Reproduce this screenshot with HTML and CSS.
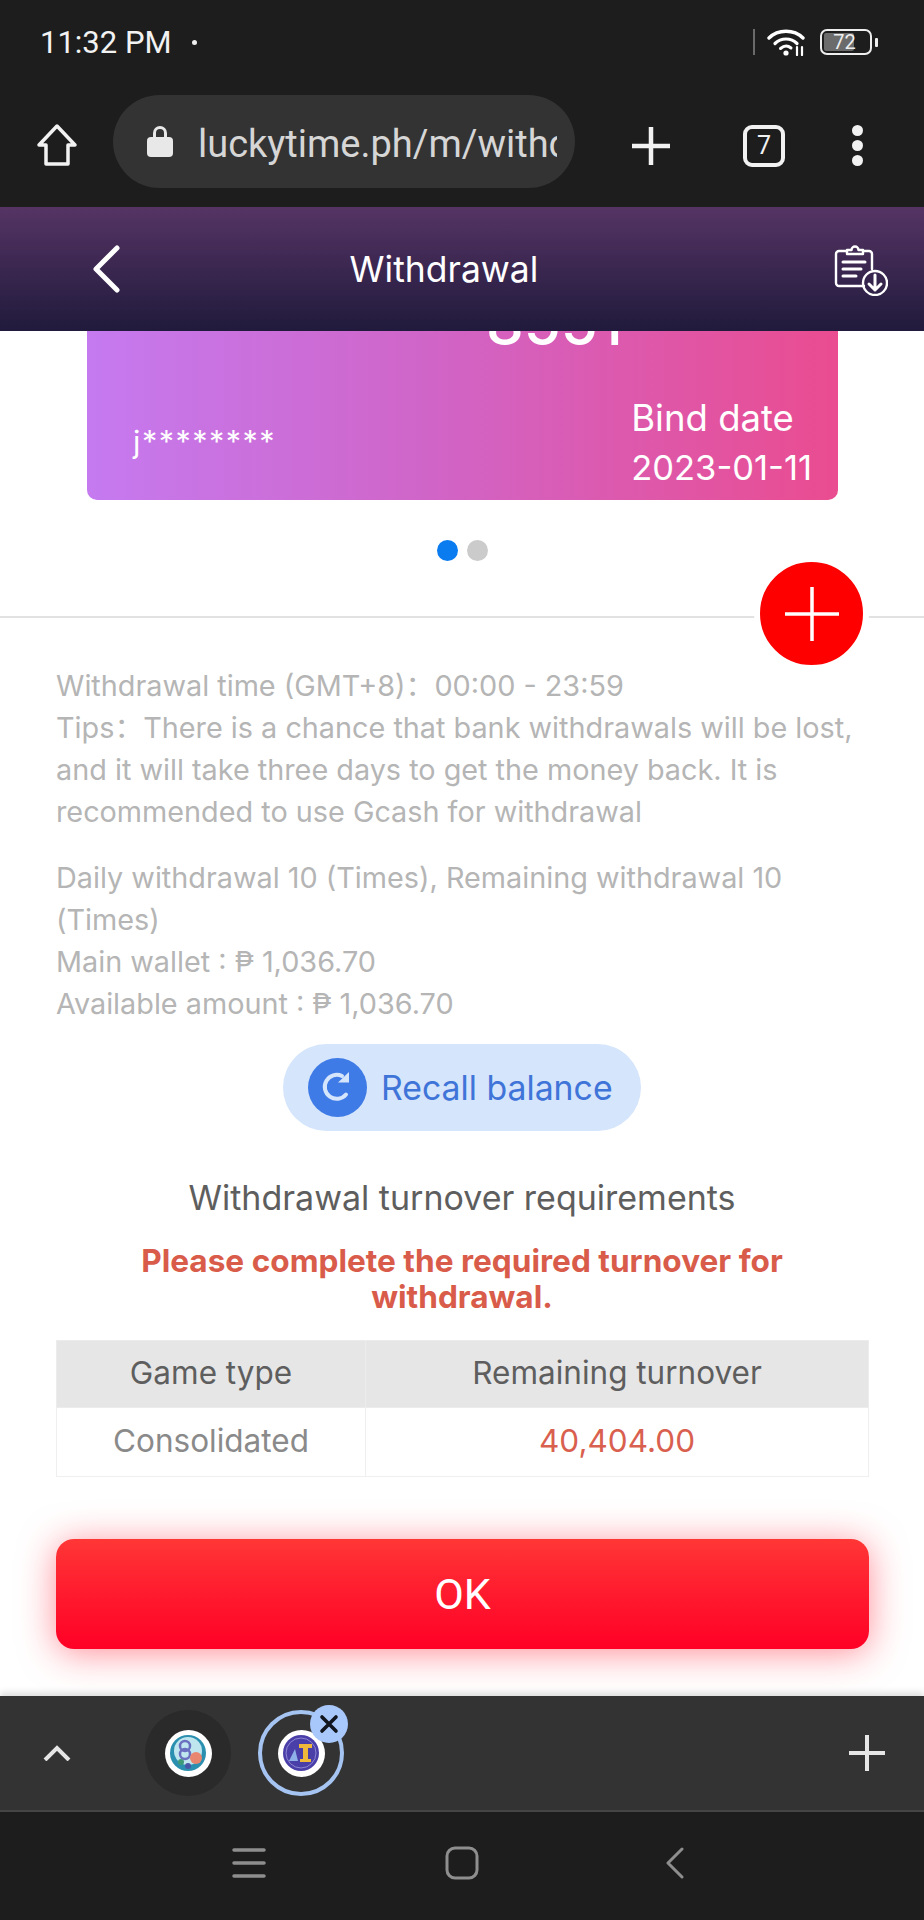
FILE: index.html
```html
<!DOCTYPE html>
<html lang="en">
<head>
<meta charset="utf-8">
<title>Withdrawal</title>
<link rel="stylesheet" href="styles.css">
</head>
<body>
<div class="phone">
  <div class="status-bar">
    <span class="clock">11:32 PM</span>
    <span class="notif-dot"></span>
    <span class="status-icons">
      <span class="status-sep"></span>
      <svg class="wifi" viewBox="0 0 40 28" width="40" height="28" fill="none" stroke="#fff" stroke-linecap="round">
        <path d="M2 10C11 1 27 1 36 10" stroke-width="3.4"/>
        <path d="M8 15.5C14 9.5 24 9.5 30 15.5" stroke-width="3.2"/>
        <path d="M13.5 20.5C17 17.5 21 17.5 24 20" stroke-width="3"/>
        <circle cx="19" cy="25" r="2.6" fill="#fff" stroke="none"/>
        <path d="M30 19v8M35 19v8" stroke-width="2.2"/>
      </svg>
      <span class="battery"><span class="battery-level"></span><span class="battery-num">72</span></span>
      <span class="battery-nub"></span>
    </span>
  </div>

  <div class="toolbar">
    <svg class="home" viewBox="0 0 42 44" width="42" height="44" fill="none" stroke="#f2f2f2" stroke-width="3.500" stroke-linejoin="round">
      <path d="M21 3L39 22H32V41H10V22H3Z"/>
    </svg>
    <div class="url-pill">
      <svg viewBox="0 0 26 32" width="26" height="32" fill="#e8e8e8">
        <path d="M6 13V8a7 7 0 0 1 14 0v5h-3V8a4 4 0 0 0-8 0v5z"/>
        <rect y="12" width="26" height="20" rx="4"/>
      </svg>
      <span class="url-text">luckytime.ph/m/withdrawal</span>
    </div>
    <svg class="tool-plus" viewBox="0 0 38 38" width="38" height="38" stroke="#f2f2f2" stroke-width="4.5">
      <path d="M19 0V38M0 19H38"/>
    </svg>
    <span class="tab-count">7</span>
    <span class="kebab"><i></i><i></i><i></i></span>
  </div>

  <header class="page-header">
    <svg class="back" viewBox="0 0 28 48" width="28" height="48" fill="none" stroke="#fff" stroke-width="5" stroke-linecap="round" stroke-linejoin="round">
      <path d="M25 3L4 24L25 45"/>
    </svg>
    <h1>Withdrawal</h1>
    <svg class="records" viewBox="0 0 54 54" width="54" height="54" fill="none" stroke="#fff" stroke-width="2.4" stroke-linecap="round" stroke-linejoin="round">
      <path d="M30 44H5a3 3 0 0 1-3-3V12a3 3 0 0 1 3-3h8M29 9h6a3 3 0 0 1 3 3v15"/>
      <path d="M13 12V8h4.500a3.500 3.500 0 0 1 7 0H29v4z"/>
      <path d="M9 20H31M9 27H27M9 34H22" stroke-width="3"/>
      <circle cx="41" cy="41" r="12"/>
      <path d="M41 33V48M35 42l6 6 6-6" stroke-width="3"/>
    </svg>
  </header>

  <main class="content">
    <section class="card">
      <div class="card-number">8551</div>
      <div class="card-foot">
        <span class="card-name">j********</span>
        <div class="card-date">
          <span>Bind date</span>
          <span class="card-date-value">2023-01-11</span>
        </div>
      </div>
    </section>

    <div class="dots"><i class="dot dot-on"></i><i class="dot"></i></div>
    <hr class="divider">
    <button class="fab" aria-label="Add card">
      <svg viewBox="0 0 54 54" width="54" height="54" stroke="#fff" stroke-width="3.500">
        <path d="M27 0V54M0 27H54"/>
      </svg>
    </button>

    <div class="notes">
      <p>Withdrawal time (GMT+8)：00:00 - 23:59<br>Tips：There is a chance that bank withdrawals will be lost, and it will take three days to get the money back. It is recommended to use Gcash for withdrawal</p>
      <p>Daily withdrawal 10 (Times), Remaining withdrawal 10 (Times)<br>Main wallet : ₱ 1,036.70<br>Available amount : ₱ 1,036.70</p>
    </div>

    <button class="recall">
      <svg viewBox="0 0 59 59" width="59" height="59">
        <circle cx="29.500" cy="29.500" r="29.500" fill="#3f7be6"/>
        <path d="M38 36.500A12 12 0 1 1 34 18" fill="none" stroke="#d5e5fb" stroke-width="4" stroke-linecap="round"/>
        <path d="M30 24.500H41V14Z" fill="#d5e5fb"/>
      </svg>
      <span>Recall balance</span>
    </button>

    <h2 class="turnover-title">Withdrawal turnover requirements</h2>
    <p class="turnover-warn">Please complete the required turnover for withdrawal.</p>

    <table class="turnover-table">
      <thead><tr><th class="col-type">Game type</th><th>Remaining turnover</th></tr></thead>
      <tbody><tr><td class="col-type">Consolidated</td><td class="amount">40,404.00</td></tr></tbody>
    </table>

    <button class="ok">OK</button>
  </main>

  <div class="tab-strip">
    <svg class="chevron" viewBox="0 0 28 16" width="28" height="16" fill="none" stroke="#e6e6e6" stroke-width="4">
      <path d="M2 15L14 3L26 15"/>
    </svg>
    <div class="tab-icon">
      <span class="favicon">
        <svg viewBox="0 0 36 36" width="36" height="36">
          <circle cx="18" cy="18" r="18" fill="#2b8fb0"/>
          <circle cx="18" cy="16" r="14" fill="#bfe6ef"/>
          <circle cx="15" cy="11" r="5" fill="none" stroke="#6a6fc0" stroke-width="2.500"/>
          <circle cx="15" cy="19" r="5" fill="none" stroke="#6a6fc0" stroke-width="2.500"/>
          <circle cx="26" cy="23" r="6" fill="#e8866f"/>
          <circle cx="11" cy="27" r="3" fill="#3f9a7a"/>
          <circle cx="18" cy="31" r="3" fill="#4a57a8"/>
        </svg>
      </span>
    </div>
    <div class="tab-icon tab-icon-active">
      <span class="favicon">
        <svg viewBox="0 0 36 36" width="36" height="36">
          <circle cx="18" cy="18" r="18" fill="#4a3fa8"/>
          <circle cx="18" cy="18" r="15" fill="none" stroke="#8d86d4" stroke-width="1"/>
          <path d="M16 9H29V13H25V24H28V27H17V24H20V13H16Z" fill="#f0b93a"/>
          <path d="M6 26L12 14L15 26Z" fill="#8fb0e8"/>
        </svg>
      </span>
      <span class="tab-close">
        <svg viewBox="0 0 20 20" width="20" height="20" stroke="#10151f" stroke-width="3.600" stroke-linecap="round">
          <path d="M3 3L17 17M17 3L3 17"/>
        </svg>
      </span>
    </div>
    <svg class="strip-plus" viewBox="0 0 36 36" width="36" height="36" stroke="#e6e6e6" stroke-width="4">
      <path d="M18 0V36M0 18H36"/>
    </svg>
  </div>

  <nav class="nav-bar">
    <svg viewBox="0 0 34 32" width="34" height="32" stroke="#8e8e8e" stroke-width="3.500" stroke-linecap="round">
      <path d="M2 3H32M2 16H32M2 29H32"/>
    </svg>
    <svg class="nav-home" viewBox="0 0 34 34" width="34" height="34" fill="none" stroke="#8e8e8e" stroke-width="3">
      <rect x="2" y="2" width="30" height="30" rx="8"/>
    </svg>
    <svg viewBox="0 0 18 32" width="18" height="32" fill="none" stroke="#8e8e8e" stroke-width="3" stroke-linecap="round" stroke-linejoin="round">
      <path d="M16 2L2 16L16 30"/>
    </svg>
  </nav>
</div>
</body>
</html>
```
FILE: styles.css
```css
* { box-sizing: border-box; }

html, body { margin: 0; padding: 0; background: #1d1d1d; }

body { font-family: Inter, "Noto Sans CJK SC", "Liberation Sans", sans-serif; }

.phone {
  width: 924px;
  height: 1920px;
  display: flex;
  flex-direction: column;
  overflow: hidden;
}

/* System status bar */
.status-bar {
  flex: none;
  height: 84px;
  padding: 0 46px 0 40px;
  display: flex;
  align-items: center;
  background: #1d1d1d;
  color: #f2f2f2;
  font-family: Roboto, sans-serif;
}
.clock { font-size: 31px; width: 132px; white-space: nowrap; }
.notif-dot { width: 5px; height: 5px; margin-left: 20px; border-radius: 50%; background: #eee; }
.status-icons { margin-left: auto; display: flex; align-items: center; }
.status-sep { width: 2px; height: 26px; background: #6a6a6a; margin-right: 12px; }
.wifi { margin-right: 13px; }
.battery {
  position: relative;
  width: 52px;
  height: 26px;
  border: 2.500px solid #eee;
  border-radius: 7px;
  display: flex;
  align-items: center;
  justify-content: center;
  overflow: hidden;
}
.battery-level { position: absolute; left: 2px; top: 2px; bottom: 2px; width: 30px; background: #6b6b6b; border-radius: 2px; }
.battery-num { position: relative; font-size: 20px; color: #eee; margin-right: 3px; }
.battery-nub { width: 3px; height: 9px; margin-left: 3px; background: #eee; border-radius: 1px; }

/* Browser toolbar */
.toolbar {
  flex: none;
  height: 123px;
  padding-left: 36px;
  display: flex;
  align-items: center;
  background: #1d1d1d;
  font-family: Roboto, sans-serif;
}
.home { flex: none; margin-top: -2px; }
.url-pill {
  flex: none;
  width: 462px;
  height: 93px;
  margin-left: 35px;
  margin-bottom: 9px;
  padding: 0 18px 0 34px;
  display: flex;
  align-items: center;
  gap: 25px;
  border-radius: 47px;
  background: #333;
}
.url-pill svg { flex: none; }
.url-text { margin-top: 6px; font-size: 38px; color: #d6d6d6; white-space: nowrap; overflow: hidden; }
.tool-plus { flex: none; margin-left: 57px; }
.tab-count {
  flex: none;
  width: 42px;
  height: 42px;
  margin-left: 73px;
  border: 4px solid #f2f2f2;
  border-radius: 9px;
  color: #f2f2f2;
  font-size: 25px;
  line-height: 34px;
  text-align: center;
}
.kebab { flex: none; margin-left: 67px; display: flex; flex-direction: column; gap: 4px; }
.kebab i { width: 11px; height: 11px; border-radius: 50%; background: #f2f2f2; }

/* Page header */
.page-header {
  flex: none;
  height: 124px;
  padding: 0 36px 0 92px;
  display: flex;
  align-items: center;
  justify-content: space-between;
  background: linear-gradient(#553464, #201a3c);
}
.page-header h1 { margin: 0 0 0 -66px; font-size: 35.500px; font-weight: 400; color: #fff; }

/* Page body */
.content {
  position: relative;
  flex: none;
  height: 1365px;
  background: #fff;
  overflow: hidden;
  display: flex;
  flex-direction: column;
}

.card {
  flex: none;
  width: 751px;
  height: 289px;
  margin: -120px 0 0 87px;
  padding: 0 26px 0 46px;
  display: flex;
  flex-direction: column;
  justify-content: space-between;
  border-radius: 10px;
  background: linear-gradient(90deg, #c57af0, #d065c8 45%, #ea4c90);
  color: #fff;
}
.card-number { margin: 87px 0 0 353px; font-size: 60px; font-weight: 500; line-height: 50px; }
.card-foot { display: flex; justify-content: space-between; align-items: center; margin-bottom: 7px; }
.card-name { font-size: 30.500px; letter-spacing: 1.500px; margin-top: -4px; }
.card-date { display: flex; flex-direction: column; font-size: 36.500px; line-height: 50px; }
.card-date-value { font-size: 34.500px; }

.dots { flex: none; height: 21px; margin-top: 40px; display: flex; justify-content: center; gap: 9px; }
.dot { width: 21px; height: 21px; border-radius: 50%; background: #cbcbcb; }
.dot-on { background: #0a7cf0; }

.divider { flex: none; width: 100%; height: 2px; margin: 55px 0 0; border: 0; background: #e2e2e2; }

.fab {
  position: absolute;
  left: 754px;
  top: 225px;
  width: 115px;
  height: 115px;
  padding: 0;
  display: flex;
  align-items: center;
  justify-content: center;
  border: 6px solid #fff;
  border-radius: 50%;
  background: #fe0000;
}

.notes { flex: none; margin: 47px 55px 0 56px; font-size: 28.800px; line-height: 42px; color: #b5b5b5; }
.notes p { margin: 0 0 24px; }
.notes p:last-child { margin-bottom: 0; }

.recall {
  flex: none;
  align-self: flex-start;
  width: 358px;
  height: 87px;
  margin: 19px 0 0 283px;
  padding: 0 0 0 25px;
  display: flex;
  align-items: center;
  gap: 14px;
  border: 0;
  border-radius: 44px;
  background: #d5e5fb;
  color: #3f74d8;
  font: 400 33.800px Inter, sans-serif;
}

.turnover-title { flex: none; margin: 47px 0 0; font-size: 34px; line-height: 40px; font-weight: 400; color: #5e5e5e; text-align: center; }
.turnover-warn { flex: none; margin: 25px 120px 0; font-size: 31.600px; line-height: 36px; font-weight: 700; color: #d95c4b; text-align: center; }

.turnover-table {
  flex: none;
  width: 813px;
  height: 136px;
  margin: 25px 0 0 56px;
  border-collapse: collapse;
  table-layout: fixed;
  font-size: 31.500px;
  text-align: center;
}
.turnover-table th { height: 67px; padding: 0 0 3px; font-weight: 400; background: #e6e6e6; color: #5e5e5e; border: 1px solid #ececec; }
.turnover-table td { height: 69px; padding: 0 0 4px; color: #8a8a8a; border: 1px solid #efefef; }
.turnover-table .col-type { width: 309px; }
.turnover-table .amount { color: #d9604f; }

.ok {
  flex: none;
  width: 813px;
  height: 110px;
  margin: 62px 0 0 56px;
  border: 0;
  border-radius: 18px;
  background: linear-gradient(#ff3636, #ff0026);
  box-shadow: 0 4px 36px rgba(255, 30, 50, 0.5);
  color: #fff;
  font: 400 43px Roboto, sans-serif;
}

/* Tab strip */
.tab-strip {
  position: relative;
  flex: none;
  height: 116px;
  padding: 0 39px 0 43px;
  display: flex;
  align-items: center;
  border-bottom: 2px solid #454545;
  background: #333;
  box-shadow: 0 -4px 6px rgba(0, 0, 0, 0.12);
}
.chevron { flex: none; }
.tab-icon {
  position: relative;
  flex: none;
  width: 86px;
  height: 86px;
  margin-left: 27px;
  display: flex;
  align-items: center;
  justify-content: center;
  border-radius: 50%;
  background: #2a2a2a;
}
.tab-icon:nth-of-type(1) { margin-left: 74px; }
.tab-icon-active { background: none; border: 4px solid #a5c4f2; }
.favicon {
  width: 47px;
  height: 47px;
  display: flex;
  align-items: center;
  justify-content: center;
  border-radius: 50%;
  background: #fff;
}
.tab-close {
  position: absolute;
  left: 48px;
  top: -9px;
  width: 38px;
  height: 38px;
  display: flex;
  align-items: center;
  justify-content: center;
  border-radius: 50%;
  background: #a8c7fa;
}
.strip-plus { flex: none; margin-left: auto; }

/* System navigation bar */
.nav-bar {
  flex: none;
  height: 108px;
  padding: 0 240px 6px 232px;
  display: flex;
  align-items: center;
  justify-content: space-between;
  background: #1d1d1d;
}
.nav-home { margin-right: 8px; }
```
